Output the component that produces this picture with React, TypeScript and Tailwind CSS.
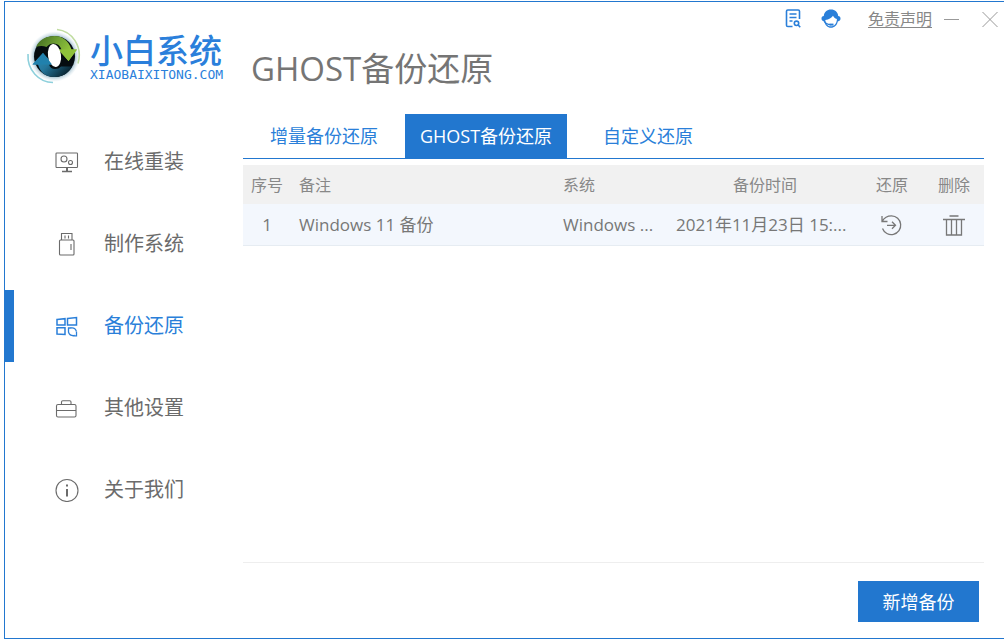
import type { ReactNode } from "react";

const navItems: { label: string; active?: boolean; icon: ReactNode }[] = [
  {
    label: "在线重装",
    icon: (
      <svg viewBox="0 0 24 24" className="h-6 w-6" fill="none" stroke="currentColor" strokeWidth="1.1">
        <rect x="1" y="3" width="21.5" height="14.5" rx="0.8" />
        <circle cx="9" cy="9" r="3" /><circle cx="15.5" cy="12.5" r="2" />
        <path d="M12 17.5v4" strokeWidth="2" /><path d="M7 21.5h10" strokeWidth="1.5" />
      </svg>
    ),
  },
  {
    label: "制作系统",
    icon: (
      <svg viewBox="0 0 24 24" className="h-6 w-6" fill="none" stroke="currentColor" strokeWidth="1.1">
        <rect x="4.5" y="8" width="14.5" height="15" rx="1" />
        <path d="M6.5 8V1.5h10.5V8M10 3.5v3M13.5 3.5v3M16 12v6" />
      </svg>
    ),
  },
  {
    label: "备份还原",
    active: true,
    icon: (
      <svg viewBox="0 0 24 24" className="h-6 w-6" fill="none" stroke="currentColor" strokeWidth="1.5">
        <path d="M2 5.5l8-.8v6.3H2zM12.5 4.5l9-1v7.500h-9zM2 13.800h8v6.700l-8-.5z" />
        <path d="M13.500 18.500v-4.500h3M15 14.200c3-.8 5.500.2 6.300 3M21.500 17.500v4.300h-4M19.800 21.500c-3 .5-5.300-.5-6.200-3" strokeWidth="1.3" />
      </svg>
    ),
  },
  {
    label: "其他设置",
    icon: (
      <svg viewBox="0 0 24 24" className="h-6 w-6" fill="none" stroke="currentColor" strokeWidth="1.1">
        <rect x="1.5" y="8.5" width="19.5" height="12.5" rx="1.5" />
        <path d="M1.5 14.500h19.500M6.500 8.500V6c0-.9.5-1.300 1.300-1.300h6.900c.8 0 1.300.4 1.300 1.300v2.500" />
      </svg>
    ),
  },
  {
    label: "关于我们",
    icon: (
      <svg viewBox="0 0 24 24" className="h-6 w-6" fill="none" stroke="currentColor" strokeWidth="1.1">
        <circle cx="12" cy="12.5" r="11" />
        <path d="M12 11v7.500M12 6.500v2" strokeWidth="2" />
      </svg>
    ),
  },
];

const tabs = [
  { label: "增量备份还原" },
  { label: "GHOST备份还原", active: true },
  { label: "自定义还原" },
];

const backups = [
  { id: 1, note: "Windows 11 备份", system: "Windows ...", time: "2021年11月23日 15:..." },
];

function Logo() {
  return (
    <svg viewBox="0 0 56 56" className="h-14 w-14 shrink-0" fill="none">
      <defs>
        <radialGradient id="halo">
          <stop offset="0.8" stopColor="#9dbccb" />
          <stop offset="1" stopColor="#eef5f8" stopOpacity="0.3" />
        </radialGradient>
        <linearGradient id="green" x1="0" y1="0" x2="1" y2="0.4">
          <stop offset="0" stopColor="#3f6620" />
          <stop offset="0.5" stopColor="#6d9f33" />
          <stop offset="1" stopColor="#9bcb3c" />
        </linearGradient>
        <linearGradient id="blue" x1="0" y1="0" x2="1" y2="0.6">
          <stop offset="0" stopColor="#2f93c0" />
          <stop offset="0.5" stopColor="#25779c" />
          <stop offset="1" stopColor="#0a2836" />
        </linearGradient>
      </defs>
      <circle cx="28.5" cy="28.5" r="25" fill="url(#halo)" />
      <circle cx="28.5" cy="28.5" r="20.500" fill="#050c10" />
      <path d="M10 19C13.500 11.500 20 8 28.500 8c8 0 14 4.500 17 13.500H51L42.500 33 32 21.500h3.500c-1.500-4-4-6-7.500-6-3 0-5.500 1-7.500 3.500-3-1.500-7-1.500-10.500 0z" fill="url(#green)" />
      <path d="M46 38.500C42.500 45.500 36 49 28.500 49 20 49 14.500 45 12 36.500H6.500L17 25l10.500 11.500H23c1 3 3 4.500 6 4.500 2.500 0 4.500-.8 6-2.500z" fill="url(#blue)" />
      <ellipse cx="28.500" cy="27.500" rx="6.500" ry="11.500" fill="#fff" transform="rotate(-8 28.500 27.500)" />
      <path d="M33 21.500h18L42.500 33z" fill="#8fc23a" />
      <path d="M17 25l9 11.500H6.500z" fill="#2181ad" />
      <path d="M31 1.500c15 1.500 26 17 21 34" stroke="#c0dca0" strokeWidth="1.6" />
      <path d="M2 26c-1 16 11 28.500 25 28.500" stroke="#8ed0dc" strokeWidth="1.6" />
    </svg>
  );
}

function Sidebar() {
  return (
    <aside className="w-[238px] shrink-0">
      <div className="flex h-[82px] items-center gap-2 pt-[26px] pl-[21px]">
        <Logo />
        <div className="pt-0.5 text-[#2b7fdb]">
          <div className="text-[33px] leading-9 font-medium">小白系统</div>
          <div className="font-['DejaVu_Sans_Mono','Liberation_Mono',monospace] text-[13px] leading-3">XIAOBAIXITONG.COM</div>
        </div>
      </div>
      <nav className="mt-[42px] flex flex-col gap-[10px]">
        {navItems.map((item) => (
          <a
            key={item.label}
            href="#"
            aria-current={item.active ? "page" : undefined}
            className={`flex h-[72px] items-center gap-[25px] border-l-[9px] pl-[41px] text-xl ${
              item.active ? "border-[#2277cf] text-[#2a7fd9]" : "border-transparent text-[#6b6b6b]"
            }`}
          >
            {item.icon}
            <span>{item.label}</span>
          </a>
        ))}
      </nav>
    </aside>
  );
}

function TopBar() {
  return (
    <div className="flex h-[34px] items-center justify-end pr-[5px] text-[#2a7fd9]">
      <button type="button" aria-label="日志" className="mr-[18px]">
        <svg viewBox="0 0 20 20" className="h-5 w-5" fill="none" stroke="currentColor" strokeWidth="1.6">
          <path d="M9.500 17.500H4.800c-.8 0-1.300-.5-1.300-1.300V2.300c0-.8.5-1.300 1.300-1.300h10.400c.8 0 1.300.5 1.300 1.300V10M6.500 5h7M6.500 8.500h7M6.500 12h3" />
          <circle cx="13.500" cy="14.300" r="2.200" /><path d="M15.200 16l2 2.200" />
        </svg>
      </button>
      <button type="button" aria-label="客服" className="mr-[27px]">
        <svg viewBox="0 0 20 20" className="h-5 w-5">
          <path d="M2.800 7C3.200 3 6 .5 10 .5S16.800 3 17.200 7c1.500.3 2.300 1.100 2.300 2.600 0 1.700-1 2.700-2.700 2.800-.9 3.900-3.300 6.300-6.800 6.300s-5.700-2.400-6.700-6.300C1.500 12.300.5 11.300.5 9.600c0-1.500.8-2.300 2.300-2.600z" fill="currentColor" />
          <path d="M4.300 11c3.700-.5 6.200-2 7.700-4.300.8 1.500 1.800 2.600 3.900 3.300 0 4.500-2.500 7.300-5.900 7.300S4.700 15 4.300 11z" fill="#fff" />
          <path d="M3 11.500c1 3 3.500 4 7 4.200" fill="none" stroke="currentColor" strokeWidth="1.2" />
          <path d="M8.500 14.600h4v2h-4z" fill="currentColor" />
        </svg>
      </button>
      <a href="#" className="mr-[11px] text-base text-[#888] underline underline-offset-2">免责声明</a>
      <button type="button" aria-label="最小化" className="mr-5 text-[#999]">
        <svg viewBox="0 0 18 18" className="h-[18px] w-[18px]" stroke="currentColor"><path d="M1 9.500h15" /></svg>
      </button>
      <button type="button" aria-label="关闭" className="text-[#999]">
        <svg viewBox="0 0 18 18" className="h-[18px] w-[18px]" stroke="currentColor"><path d="M1.500 2l15 15M16.500 2l-15 15" /></svg>
      </button>
    </div>
  );
}

function BackupTable() {
  return (
    <table className="mt-[6px] w-full table-fixed text-base text-[#777]">
      <colgroup>
        <col className="w-12" />
        <col />
        <col className="w-[115px]" />
        <col className="w-[190px]" />
        <col className="w-[64px]" />
        <col className="w-[60px]" />
      </colgroup>
      <thead>
        <tr className="h-[39px] bg-[#f1f1f1] text-[#888] *:font-normal">
          <th scope="col">序号</th>
          <th scope="col" className="pl-2 text-left">备注</th>
          <th scope="col" className="pl-2 text-left">系统</th>
          <th scope="col">备份时间</th>
          <th scope="col">还原</th>
          <th scope="col">删除</th>
        </tr>
      </thead>
      <tbody>
        {backups.map((b) => (
          <tr key={b.id} className="h-[41px] border-b border-[#e6ecf2] bg-[#f3f7fd] text-[17px]">
            <td className="text-center">{b.id}</td>
            <td className="truncate pl-2">{b.note}</td>
            <td className="pl-2 whitespace-nowrap">{b.system}</td>
            <td className="pl-[6px] text-left whitespace-nowrap">{b.time}</td>
            <td className="text-center">
              <button type="button" aria-label="还原" className="align-middle">
                <svg viewBox="0 0 22 22" className="h-[22px] w-[22px]" fill="none" stroke="currentColor" strokeWidth="1.3">
                  <path d="M1 1v5.500h5.500M1.300 6.200C3 3 6.500.8 10.500.8a9.400 9.400 0 1 1-9 12.700M6 10.300h8.500M11 6.800l3.500 3.500-3.500 3.500" />
                </svg>
              </button>
            </td>
            <td className="text-center">
              <button type="button" aria-label="删除" className="align-middle">
                <svg viewBox="0 0 22 22" className="h-[22px] w-[22px]" fill="none" stroke="currentColor" strokeWidth="1.3">
                  <path d="M6.500 1h9M0 4.500h22M3.500 4.500v15.500h15V4.500M8.500 4.500v15.500M13.500 4.500v15.500" />
                </svg>
              </button>
            </td>
          </tr>
        ))}
      </tbody>
    </table>
  );
}

export default function App() {
  return (
    <div className="flex min-h-screen bg-white pt-px pl-1 font-['Open_Sans','Noto_Sans_CJK_SC',sans-serif]">
      <div className="flex flex-1 border-y border-l border-[#2277cf]">
        <Sidebar />
        <main className="flex min-w-0 flex-1 flex-col">
          <TopBar />
          <h1 className="pl-2 text-[33px] leading-[66px] text-[#757575]">GHOST备份还原</h1>
          <div className="mt-3 mr-5">
            <div role="tablist" className="flex border-b border-[#2277cf]">
              {tabs.map((t) => (
                <button
                  key={t.label}
                  type="button"
                  role="tab"
                  aria-selected={!!t.active}
                  className={`h-11 w-[162px] text-lg ${t.active ? "bg-[#2277cf] text-white" : "text-[#2a7fd9]"}`}
                >
                  {t.label}
                </button>
              ))}
            </div>
            <BackupTable />
          </div>
          <footer className="mt-auto mr-5 flex justify-end border-t border-[#eee] pt-[18px] pr-[5px] pb-4">
            <button type="button" className="h-[41px] w-[121px] bg-[#2277cf] text-lg text-white">新增备份</button>
          </footer>
        </main>
      </div>
    </div>
  );
}
